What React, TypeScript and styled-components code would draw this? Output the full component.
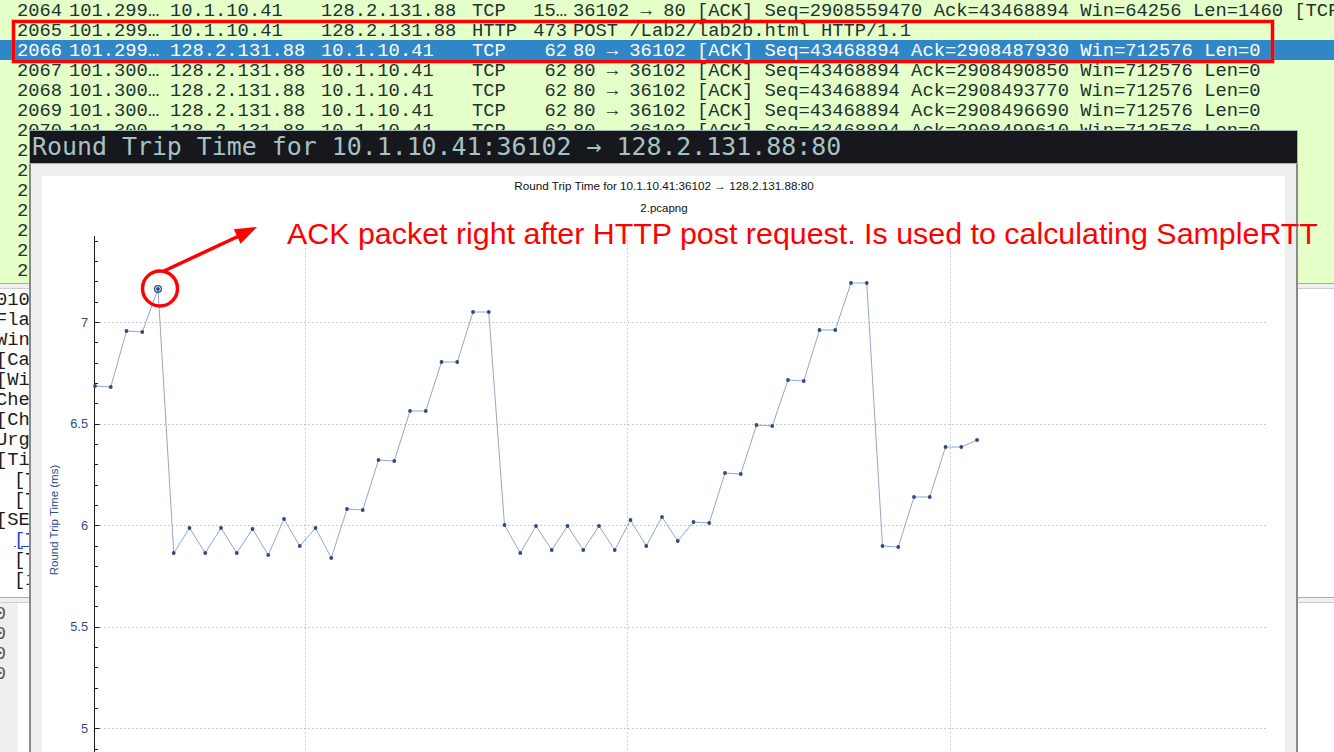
import React from 'react';
import styled, { createGlobalStyle } from 'styled-components';

const GlobalStyle = createGlobalStyle`
  html, body { margin: 0; padding: 0; width: 1334px; height: 752px; overflow: hidden; background: #ffffff; }
  #root { width: 1334px; height: 752px; }
`;

const Screen = styled.div`
  position: relative;
  width: 1334px;
  height: 752px;
  overflow: hidden;
  display: flex;
  flex-direction: column;
  font-family: "Liberation Mono", "DejaVu Sans Mono", monospace;
  font-size: 18.8px;
`;

const PacketList = styled.div`
  flex: none;
  height: 283px;
  background: #e4ffc7;
  overflow: hidden;
`;

const Row = styled.div<{ $selected?: boolean }>`
  display: grid;
  grid-template-columns: 64px 103px 151px 151px 61px 39px minmax(0, 1fr);
  height: 20px;
  line-height: 23px;
  white-space: nowrap;
  color: ${(p) => (p.$selected ? '#ffffff' : '#1d3330')};
  background: ${(p) => (p.$selected ? '#2f87c7' : 'transparent')};
`;

const Cell = styled.span<{ $align?: 'left' | 'right'; $pad?: number }>`
  text-align: ${(p) => p.$align ?? 'left'};
  padding-left: ${(p) => (p.$align === 'right' ? 0 : p.$pad ?? 3)}px;
  padding-right: ${(p) => (p.$align === 'right' ? 2 : 0)}px;
`;

const Splitter = styled.div`
  flex: none;
  height: 6px;
  box-sizing: border-box;
  background: #f0f0f0;
  border-top: 1px solid #a9a9a9;
  border-bottom: 1px solid #cdcdcd;
`;

const Details = styled.div`
  flex: none;
  height: 308px;
  background: #ffffff;
  overflow: hidden;
`;

const DetailLine = styled.div<{ $indent?: number; $link?: boolean }>`
  height: 20px;
  line-height: 22px;
  white-space: nowrap;
  margin-left: ${(p) => -4 + (p.$indent ?? 0) * 18}px;
  color: ${(p) => (p.$link ? '#2040d8' : '#1c1c1c')};
  text-decoration: ${(p) => (p.$link ? 'underline' : 'none')};
`;

const HexPane = styled.div`
  flex: 1;
  display: flex;
  background: #ffffff;
`;

const OffsetColumn = styled.div`
  width: 18px;
  flex: none;
  background: #efefef;
  overflow: hidden;
`;

const OffsetLine = styled.div`
  height: 20px;
  line-height: 22px;
  display: flex;
  justify-content: flex-end;
  padding-right: 12px;
  color: #555;
  white-space: nowrap;
`;

const HexColumn = styled.div`
  flex: 1;
  padding-left: 22px;
`;

const HexLine = styled.div`
  height: 20px;
  line-height: 22px;
  white-space: nowrap;
  color: #1c1c1c;
`;

const RedBox = styled.div`
  position: absolute;
  left: 12px;
  top: 20px;
  width: 1262px;
  height: 43px;
  box-sizing: border-box;
  border: 3px solid #ff0000;
  box-shadow: 0 0 0 1px rgba(255, 60, 60, 0.35), inset 0 0 0 1px rgba(255, 60, 60, 0.35);
  z-index: 4;
`;

const ChartWindow = styled.section`
  position: absolute;
  left: 29px;
  top: 130px;
  width: 1269px;
  height: 640px;
  display: flex;
  flex-direction: column;
  z-index: 2;
`;

const TitleBar = styled.header`
  flex: none;
  box-sizing: border-box;
  height: 34px;
  background: #16181d;
  border: 1px solid #9fb3b3;
  color: #a6c2c2;
  font-family: "DejaVu Sans Mono", monospace;
  font-size: 24.9px;
  line-height: 32px;
  padding-left: 2px;
  white-space: nowrap;
  overflow: hidden;
`;

const WindowBody = styled.div`
  flex: 1;
  background: #eeeeee;
  border-left: 2px solid #8a8a8a;
  border-right: 2px solid #8a8a8a;
  padding: 12px 11px 0;
  display: flex;
`;

const PlotPanel = styled.div`
  flex: 1;
  background: #ffffff;
  overflow: hidden;
`;

const Overlay = styled.svg`
  position: absolute;
  left: 0;
  top: 0;
  z-index: 5;
  pointer-events: none;
`;

const NoteText = styled.div`
  position: absolute;
  left: 287px;
  top: 218px;
  z-index: 5;
  color: #ff0000;
  font-family: "Liberation Sans", Arial, sans-serif;
  font-size: 30.4px;
  line-height: 30px;
  white-space: nowrap;
`;

type Packet = { no: string; time: string; src: string; dst: string; proto: string; len: string; info: string };

const packets: Packet[] = [
  { no: '2064', time: '101.299…', src: '10.1.10.41', dst: '128.2.131.88', proto: 'TCP', len: '15…', info: '36102 → 80 [ACK] Seq=2908559470 Ack=43468894 Win=64256 Len=1460 [TCP segment of a reassembled PDU]' },
  { no: '2065', time: '101.299…', src: '10.1.10.41', dst: '128.2.131.88', proto: 'HTTP', len: '473', info: 'POST /Lab2/lab2b.html HTTP/1.1' },
  { no: '2066', time: '101.299…', src: '128.2.131.88', dst: '10.1.10.41', proto: 'TCP', len: '62', info: '80 → 36102 [ACK] Seq=43468894 Ack=2908487930 Win=712576 Len=0' },
  { no: '2067', time: '101.300…', src: '128.2.131.88', dst: '10.1.10.41', proto: 'TCP', len: '62', info: '80 → 36102 [ACK] Seq=43468894 Ack=2908490850 Win=712576 Len=0' },
  { no: '2068', time: '101.300…', src: '128.2.131.88', dst: '10.1.10.41', proto: 'TCP', len: '62', info: '80 → 36102 [ACK] Seq=43468894 Ack=2908493770 Win=712576 Len=0' },
  { no: '2069', time: '101.300…', src: '128.2.131.88', dst: '10.1.10.41', proto: 'TCP', len: '62', info: '80 → 36102 [ACK] Seq=43468894 Ack=2908496690 Win=712576 Len=0' },
  { no: '2070', time: '101.300…', src: '128.2.131.88', dst: '10.1.10.41', proto: 'TCP', len: '62', info: '80 → 36102 [ACK] Seq=43468894 Ack=2908499610 Win=712576 Len=0' },
  { no: '2071', time: '101.300…', src: '128.2.131.88', dst: '10.1.10.41', proto: 'TCP', len: '62', info: '80 → 36102 [ACK] Seq=43468894 Ack=2908502530 Win=712576 Len=0' },
  { no: '2072', time: '101.301…', src: '128.2.131.88', dst: '10.1.10.41', proto: 'TCP', len: '62', info: '80 → 36102 [ACK] Seq=43468894 Ack=2908505450 Win=712576 Len=0' },
  { no: '2073', time: '101.301…', src: '128.2.131.88', dst: '10.1.10.41', proto: 'TCP', len: '62', info: '80 → 36102 [ACK] Seq=43468894 Ack=2908508370 Win=712576 Len=0' },
  { no: '2074', time: '101.301…', src: '128.2.131.88', dst: '10.1.10.41', proto: 'TCP', len: '62', info: '80 → 36102 [ACK] Seq=43468894 Ack=2908511290 Win=712576 Len=0' },
  { no: '2075', time: '101.301…', src: '128.2.131.88', dst: '10.1.10.41', proto: 'TCP', len: '62', info: '80 → 36102 [ACK] Seq=43468894 Ack=2908514210 Win=712576 Len=0' },
  { no: '2076', time: '101.302…', src: '128.2.131.88', dst: '10.1.10.41', proto: 'TCP', len: '62', info: '80 → 36102 [ACK] Seq=43468894 Ack=2908517130 Win=712576 Len=0' },
  { no: '2077', time: '101.302…', src: '128.2.131.88', dst: '10.1.10.41', proto: 'TCP', len: '62', info: '80 → 36102 [ACK] Seq=43468894 Ack=2908520050 Win=712576 Len=0' },
];

const details: { text: string; indent?: number; link?: boolean }[] = [
  { text: '0101 .... = Header Length: 20 bytes (5)' },
  { text: 'Flags: 0x010 (ACK)' },
  { text: 'Window: 5567' },
  { text: '[Calculated window size: 712576]' },
  { text: '[Window size scaling factor: 128]' },
  { text: 'Checksum: 0x2d1a [unverified]' },
  { text: '[Checksum Status: Unverified]' },
  { text: 'Urgent Pointer: 0' },
  { text: '[Timestamps]' },
  { text: '[Time since first frame in this TCP stream: 0.173 seconds]', indent: 1 },
  { text: '[Time since previous frame in this TCP stream: 0.000 seconds]', indent: 1 },
  { text: '[SEQ/ACK analysis]' },
  { text: '[This is an ACK to the segment in frame: 2065]', indent: 1, link: true },
  { text: '[The RTT to ACK the segment was: 0.007162000 seconds]', indent: 1 },
  { text: '[iRTT: 0.028 seconds]', indent: 1 },
];

const hexRows = [
  { off: '0000', bytes: '00 1c 42 4e 6a 0b 00 0c 29 1f 3a 2e 08 00 45 00' },
  { off: '0010', bytes: '00 28 8f 21 40 00 34 06 d2 11 80 02 83 58 0a 01' },
  { off: '0020', bytes: '0a 29 00 50 8d 06 02 97 47 7e ad 4b 36 fa 50 10' },
  { off: '0030', bytes: '15 bf 2d 1a 00 00 00 00 00 00 00 00' },
];

const rttY = [
  386, 387, 331, 332, 289, 553, 528, 553, 528, 553, 529, 555, 519, 546, 528, 558, 509, 510, 460, 461,
  411, 411, 362, 362, 312, 312, 525, 553, 526, 550, 526, 550, 526, 550, 520, 546, 517, 541, 522, 523,
  473, 474, 425, 426, 380, 381, 330, 330, 283, 283, 546, 547, 497, 497, 447, 447, 440,
];

const yOf = (v: number) => 322 + (7 - v) * 203.2;
const AXIS_X = 94.5;
const PLOT_RIGHT = 1268;
const AXIS_TOP = 236;
const LABEL = '#2d4c8c';

const RttChart: React.FC = () => {
  const pts = rttY.map((y, i) => ({ x: 95 + i * 15.75, y }));
  const ticks: number[] = [];
  for (let k = 48; k <= 74; k++) ticks.push(k / 10);
  const majors = [5, 5.5, 6, 6.5, 7];
  return (
    <svg width={1243} height={600} viewBox="42 176 1243 600">
      <text x={664} y={189.5} textAnchor="middle" fontFamily="Liberation Sans, Arial, sans-serif" fontSize={11.7} fill="#111">
        Round Trip Time for 10.1.10.41:36102 → 128.2.131.88:80
      </text>
      <text x={664} y={211.5} textAnchor="middle" fontFamily="Liberation Sans, Arial, sans-serif" fontSize={11.5} fill="#111">
        2.pcapng
      </text>
      {majors.map((v) => (
        <line key={'h' + v} x1={96} x2={PLOT_RIGHT} y1={Math.round(yOf(v)) + 0.5} y2={Math.round(yOf(v)) + 0.5} stroke="#bdbdbd" strokeDasharray="1.5 2.5" />
      ))}
      {[305.5, 627.5, 950.5].map((x) => (
        <line key={'v' + x} x1={x} x2={x} y1={AXIS_TOP} y2={760} stroke="#c4c4c4" strokeDasharray="1.5 2.5" />
      ))}
      <line x1={AXIS_X} x2={AXIS_X} y1={AXIS_TOP} y2={760} stroke="#1a1a1a" />
      {ticks.map((v) => {
        const y = Math.round(yOf(v)) + 0.5;
        const major = Math.abs(v * 2 - Math.round(v * 2)) < 1e-6;
        return <line key={'t' + v} x1={AXIS_X} x2={AXIS_X + (major ? 5 : 3.5)} y1={y} y2={y} stroke="#1a1a1a" />;
      })}
      {majors.map((v) => (
        <text key={'l' + v} x={88} y={yOf(v) + 4.5} textAnchor="end" fontFamily="Liberation Sans, Arial, sans-serif" fontSize={12.8} fill={LABEL}>
          {String(v)}
        </text>
      ))}
      <text
        transform="translate(58 520) rotate(-90)"
        textAnchor="middle"
        fontFamily="Liberation Sans, Arial, sans-serif"
        fontSize={11.5}
        fill={LABEL}
      >
        Round Trip Time (ms)
      </text>
      <polyline points={pts.map((p) => `${p.x},${p.y}`).join(' ')} fill="none" stroke="#94a7c6" strokeWidth={1} />
      {pts.map((p, i) => (
        <circle key={'p' + i} cx={p.x} cy={p.y} r={1.9} fill="#2d4a85" />
      ))}
      <circle cx={pts[4].x} cy={pts[4].y} r={3.4} fill="none" stroke="#2d4a85" strokeWidth={1.3} />
    </svg>
  );
};

const App: React.FC = () => (
  <>
    <GlobalStyle />
    <Screen>
      <PacketList>
        {packets.map((p) => (
          <Row key={p.no} $selected={p.no === '2066'}>
            <Cell $align="right">{p.no}</Cell>
            <Cell $pad={5}>{p.time}</Cell>
            <Cell>{p.src}</Cell>
            <Cell>{p.dst}</Cell>
            <Cell>{p.proto}</Cell>
            <Cell $align="right">{p.len}</Cell>
            <Cell $pad={4}>{p.info}</Cell>
          </Row>
        ))}
      </PacketList>
      <Splitter />
      <Details>
        {details.map((d, i) => (
          <DetailLine key={i} $indent={d.indent} $link={d.link}>
            {d.text}
          </DetailLine>
        ))}
      </Details>
      <Splitter />
      <HexPane>
        <OffsetColumn>
          {hexRows.map((h) => (
            <OffsetLine key={h.off}>{h.off}</OffsetLine>
          ))}
        </OffsetColumn>
        <HexColumn>
          {hexRows.map((h) => (
            <HexLine key={h.off}>{h.bytes}</HexLine>
          ))}
        </HexColumn>
      </HexPane>

      <RedBox />

      <ChartWindow>
        <TitleBar>Round Trip Time for 10.1.10.41:36102 → 128.2.131.88:80</TitleBar>
        <WindowBody>
          <PlotPanel>
            <RttChart />
          </PlotPanel>
        </WindowBody>
      </ChartWindow>

      <Overlay width={1334} height={752} viewBox="0 0 1334 752">
        <circle cx={160} cy={288.5} r={17.5} fill="none" stroke="#ff0000" strokeWidth={3.5} />
        <line x1={164} y1={271} x2={240} y2={235.5} stroke="#ff0000" strokeWidth={3.5} />
        <polygon points="257,227 240.6,243.7 233.8,229.3" fill="#ff0000" />
      </Overlay>
      <NoteText>ACK packet right after HTTP post request. Is used to calculating SampleRTT</NoteText>
    </Screen>
  </>
);

export default App;
